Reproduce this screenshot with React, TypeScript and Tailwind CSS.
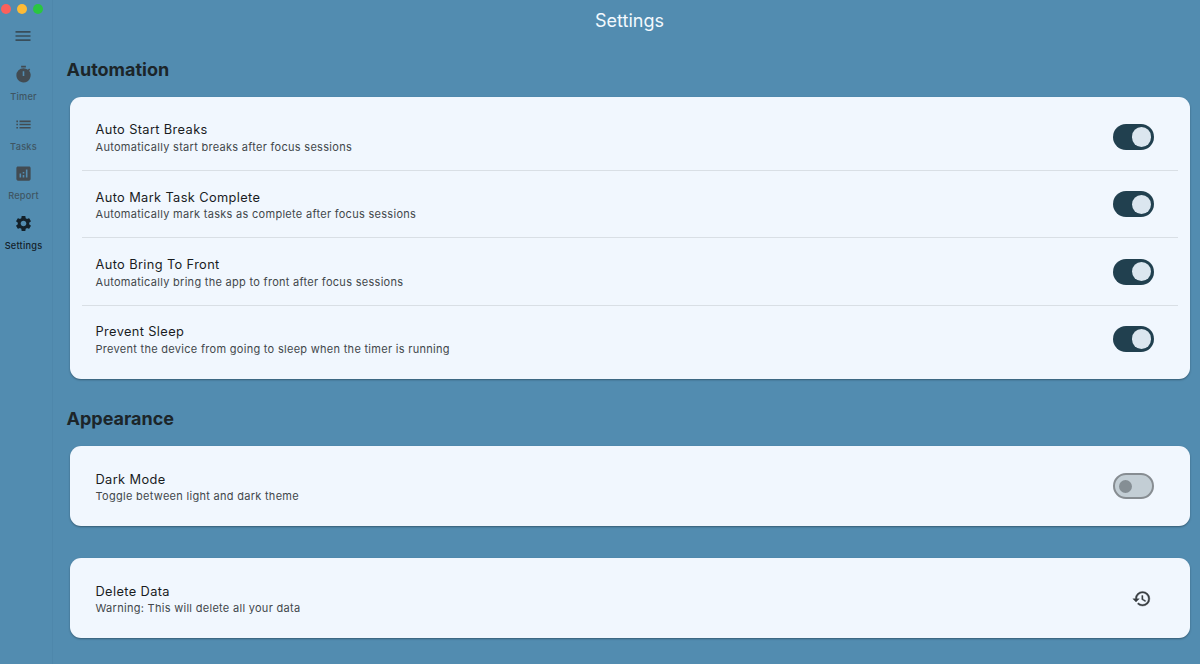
import { useState } from "react";
import type { ReactNode } from "react";
import { MdAnalytics, MdHistory, MdList, MdMenu, MdSettings, MdTimer } from "react-icons/md";

function Toggle({ initial, label }: { initial: boolean; label: string }) {
  const [on, setOn] = useState(initial);
  return (
    <button
      role="switch"
      aria-checked={on}
      aria-label={label}
      onClick={() => setOn(!on)}
      className={
        on
          ? "flex h-[26px] w-[41.5px] items-center justify-end rounded-full bg-[#21404f] pr-[3px]"
          : "flex h-[26px] w-[41.5px] items-center rounded-full border-2 border-[#878d92] bg-[#c3ced5] pl-[4px]"
      }
    >
      <span className={on ? "size-[19.5px] rounded-full bg-[#dbe6ef]" : "size-[13px] rounded-full bg-[#858e94]"} />
    </button>
  );
}

function Row({ title, detail, children }: { title: string; detail: string; children: ReactNode }) {
  return (
    <div className="flex h-[66.3px] items-center justify-between pr-[23.2px] pl-[14px]">
      <div className="pt-[1.5px]">
        <div className="text-[12.8px] leading-5 tracking-[0.38px] text-[#191c1e]">{title}</div>
        <div className="-mt-[1.5px] text-[11px] leading-4 tracking-[0.29px] text-[#42474b]">{detail}</div>
      </div>
      {children}
    </div>
  );
}

function Card({ children }: { children: ReactNode }) {
  return (
    <div className="rounded-[11px] bg-[#f1f7fe] px-3 py-[6.85px] shadow-[0_1px_2px_rgba(0,0,0,0.35)]">{children}</div>
  );
}

function NavItem({ icon, label, active = false }: { icon: ReactNode; label: string; active?: boolean }) {
  return (
    <div className={active ? "flex h-[49.6px] flex-col items-center text-[#13212a]" : "flex h-[49.6px] flex-col items-center text-[#3f5562]"}>
      <div className={active ? "text-[19px] text-[#13212a]" : "text-[19px] text-[#424b52]"}>{icon}</div>
      <div className="mt-[7px] text-[9.2px] leading-3 font-medium tracking-[0.24px]">{label}</div>
    </div>
  );
}

const automation = [
  { title: "Auto Start Breaks", detail: "Automatically start breaks after focus sessions" },
  { title: "Auto Mark Task Complete", detail: "Automatically mark tasks as complete after focus sessions" },
  { title: "Auto Bring To Front", detail: "Automatically bring the app to front after focus sessions" },
  { title: "Prevent Sleep", detail: "Prevent the device from going to sleep when the timer is running" },
];

export default function App() {
  return (
    <div className="flex h-[664px] w-[1200px] overflow-hidden bg-[#528cb0] font-['Inter',sans-serif]">
      <aside className="flex w-[53px] shrink-0 flex-col border-r border-[#4e87ab] pr-[5px]">
        <div className="flex gap-[6px] pt-1 pl-[0.5px]">
          <span className="size-[10px] rounded-full bg-[#fc605b]" />
          <span className="size-[10px] rounded-full bg-[#fdbb36]" />
          <span className="size-[10px] rounded-full bg-[#2ac640]" />
        </div>
        <button aria-label="Menu" className="mt-[12px] flex justify-center pr-px text-[20px] text-[#384d5a]">
          <MdMenu />
        </button>
        <nav className="mt-[19px]">
          <NavItem icon={<MdTimer />} label="Timer" />
          <NavItem icon={<MdList />} label="Tasks" />
          <NavItem icon={<MdAnalytics />} label="Report" />
          <NavItem icon={<MdSettings />} label="Settings" active />
        </nav>
      </aside>
      <main className="min-w-0 flex-1 pr-[10.5px] pl-[16.5px]">
        <h1 className="h-[41px] text-center text-[18px] leading-[41px] text-[#f3f9fe]">Settings</h1>
        <h2 className="-ml-[3px] mt-[15px] h-[41px] text-[18px] leading-7 font-bold text-[#1c2529]">Automation</h2>
        <Card>
          <div className="flex flex-col divide-y divide-[#d9dfe5] *:box-content">
            {automation.map((item) => (
              <Row key={item.title} title={item.title} detail={item.detail}>
                <Toggle initial label={item.title} />
              </Row>
            ))}
          </div>
        </Card>
        <h2 className="-ml-[3px] mt-[26.5px] h-[41px] text-[18px] leading-7 font-bold text-[#1c2529]">Appearance</h2>
        <Card>
          <Row title="Dark Mode" detail="Toggle between light and dark theme">
            <Toggle initial={false} label="Dark Mode" />
          </Row>
        </Card>
        <div className="h-8" />
        <Card>
          <Row title="Delete Data" detail="Warning: This will delete all your data">
            <button aria-label="Delete Data" className="mr-[3px] text-[19.5px] text-[#373c40]">
              <MdHistory className="[&>path:last-child]:stroke-current [&>path:last-child]:[stroke-width:0.45]" />
            </button>
          </Row>
        </Card>
      </main>
    </div>
  );
}
